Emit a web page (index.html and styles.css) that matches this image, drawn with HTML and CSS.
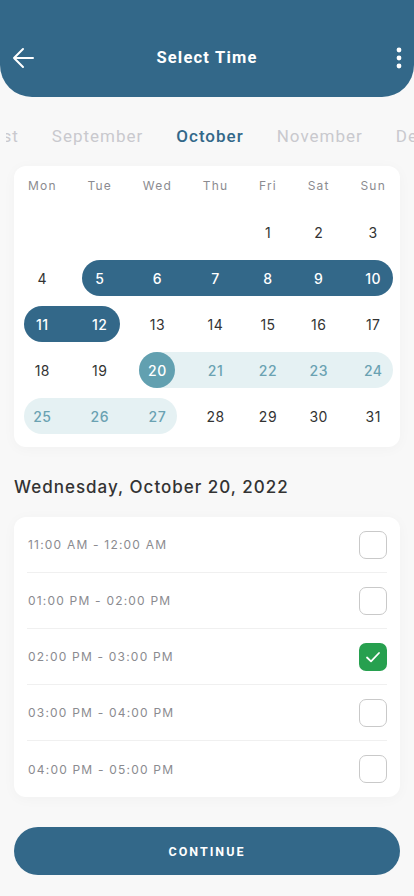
FILE: index.html
```html
<!DOCTYPE html>
<html lang="en">
<head>
    <meta charset="UTF-8">
    <meta name="viewport" content="width=device-width, initial-scale=1.0">
    <title>Select Time</title>
    <link rel="stylesheet" href="styles.css">
</head>
<body>
    <div class="header">
        <a href="javascript:;" class="icon back">
            <svg width="22" height="22" viewBox="0 0 22 22"><path d="M21 11H2M11 2L2 11l9 9" fill="none" stroke="#fff" stroke-width="2" stroke-linecap="round" stroke-linejoin="round"/></svg>
        </a>
        <h1 class="title">Select Time</h1>
        <a href="javascript:;" class="icon more">
            <svg width="22" height="22" viewBox="0 0 22 22"><circle cx="19" cy="3" r="2.4" fill="#fff"/><circle cx="19" cy="11" r="2.4" fill="#fff"/><circle cx="19" cy="19" r="2.4" fill="#fff"/></svg>
        </a>
    </div>

    <div class="months">
        <div class="side left">
            <span>August</span>
            <span>September</span>
        </div>
        <span class="current">October</span>
        <div class="side right">
            <span>November</span>
            <span>December</span>
        </div>
    </div>

    <div class="card calendar">
        <div class="wd">Mon</div>
        <div class="wd">Tue</div>
        <div class="wd">Wed</div>
        <div class="wd">Thu</div>
        <div class="wd">Fri</div>
        <div class="wd">Sat</div>
        <div class="wd">Sun</div>

        <div class="day"></div>
        <div class="day"></div>
        <div class="day"></div>
        <div class="day"></div>
        <div class="day"><span>1</span></div>
        <div class="day"><span>2</span></div>
        <div class="day"><span>3</span></div>

        <div class="day"><span>4</span></div>
        <div class="day dark start"><span>5</span></div>
        <div class="day dark"><span>6</span></div>
        <div class="day dark"><span>7</span></div>
        <div class="day dark"><span>8</span></div>
        <div class="day dark"><span>9</span></div>
        <div class="day dark end"><span>10</span></div>

        <div class="day dark start"><span>11</span></div>
        <div class="day dark end"><span>12</span></div>
        <div class="day"><span>13</span></div>
        <div class="day"><span>14</span></div>
        <div class="day"><span>15</span></div>
        <div class="day"><span>16</span></div>
        <div class="day"><span>17</span></div>

        <div class="day"><span>18</span></div>
        <div class="day"><span>19</span></div>
        <div class="day light start picked"><span>20</span></div>
        <div class="day light"><span>21</span></div>
        <div class="day light"><span>22</span></div>
        <div class="day light"><span>23</span></div>
        <div class="day light end"><span>24</span></div>

        <div class="day light start"><span>25</span></div>
        <div class="day light"><span>26</span></div>
        <div class="day light end"><span>27</span></div>
        <div class="day"><span>28</span></div>
        <div class="day"><span>29</span></div>
        <div class="day"><span>30</span></div>
        <div class="day"><span>31</span></div>
    </div>

    <h2 class="date">Wednesday, October 20, 2022</h2>

    <div class="card slots">
        <div class="slot">
            <span>11:00 AM - 12:00 AM</span>
            <span class="check"></span>
        </div>
        <div class="slot">
            <span>01:00 PM - 02:00 PM</span>
            <span class="check"></span>
        </div>
        <div class="slot">
            <span>02:00 PM - 03:00 PM</span>
            <span class="check on">
                <svg width="28" height="28" viewBox="0 0 28 28"><path d="M8 14.5l4 3.8 8-8.3" fill="none" stroke="#fff" stroke-width="1.8" stroke-linecap="round" stroke-linejoin="round"/></svg>
            </span>
        </div>
        <div class="slot">
            <span>03:00 PM - 04:00 PM</span>
            <span class="check"></span>
        </div>
        <div class="slot">
            <span>04:00 PM - 05:00 PM</span>
            <span class="check"></span>
        </div>
    </div>

    <a href="javascript:;" class="btn">CONTINUE</a>
</body>
</html>
```

FILE: styles.css
```css
* {
    padding: 0;
    margin: 0;
    box-sizing: border-box;
}
a {
    text-decoration: none;
}
body {
    background-color: #f8f8f8;
    font-family: Inter, "Noto Sans", sans-serif;
    color: #333;
}

/* header */
.header {
    display: flex;
    align-items: center;
    justify-content: space-between;
    height: 97px;
    padding: 18px 12px 0 12px;
    background-color: #336889;
    border-radius: 0 0 32px 32px;
}
.header .icon {
    display: flex;
    width: 22px;
    height: 22px;
}
.header .title {
    font-family: Roboto, "Liberation Sans", sans-serif;
    font-size: 16.5px;
    font-weight: 700;
    letter-spacing: 1.2px;
    color: #fff;
}

/* month strip */
.months {
    display: grid;
    grid-template-columns: minmax(0, 1fr) auto minmax(0, 1fr);
    column-gap: 33px;
    padding: 27px 0 18px 6px;
    font-family: Roboto, "Liberation Sans", sans-serif;
    font-size: 17px;
    line-height: 24px;
    letter-spacing: 1px;
    color: #c9c9ce;
    white-space: nowrap;
    overflow: hidden;
}
.months .side {
    display: flex;
    gap: 33px;
    overflow: hidden;
}
.months .left {
    justify-content: flex-end;
}
.months .current {
    color: #336889;
    font-weight: 500;
}

/* cards */
.card {
    margin: 0 14px;
    background-color: #fff;
    border-radius: 12px;
    box-shadow: 0 2px 14px rgba(0, 0, 0, 0.03);
}

/* calendar: columns take the width of the weekday names */
.calendar {
    display: grid;
    grid-template-columns: repeat(7, auto);
    grid-template-rows: 33px;
    grid-auto-rows: 46px;
    justify-content: space-between;
    padding: 10px 14px 8px 14px;
}
.calendar .wd {
    font-size: 12px;
    line-height: 20px;
    letter-spacing: 1.2px;
    color: #8b8b90;
    text-align: center;
}
.calendar .day {
    position: relative;
    display: flex;
    align-items: center;
    justify-content: center;
    font-size: 14px;
    letter-spacing: 0.5px;
}
.calendar .day span {
    position: relative;
    z-index: 1;
    display: flex;
    align-items: center;
    justify-content: center;
    flex: none;
    width: 36px;
    height: 36px;
    margin: 0 -18px;
    border-radius: 50%;
}
.calendar .dark::before,
.calendar .light::before {
    content: "";
    position: absolute;
    top: 5px;
    bottom: 5px;
    left: -17px;
    right: -17px;
}
.calendar .dark::before {
    background-color: #336889;
}
.calendar .light::before {
    background-color: #e5f1f3;
}
.calendar .start::before {
    left: calc(50% - 18px);
    border-radius: 18px 0 0 18px;
}
.calendar .end::before {
    right: calc(50% - 20px);
    border-radius: 0 18px 18px 0;
}
.calendar .dark {
    color: #fff;
    font-weight: 500;
}
.calendar .light {
    color: #6aa2b2;
    font-weight: 500;
}
.calendar .picked span {
    background-color: #62a0b0;
    color: #fff;
}

/* selected day */
.date {
    margin: 28px 14px 18px 14px;
    font-size: 17px;
    font-weight: 500;
    line-height: 24px;
    letter-spacing: 1px;
    color: #333;
}

/* time slots */
.slots {
    padding: 0 13px;
}
.slot {
    display: flex;
    align-items: center;
    justify-content: space-between;
    height: 56px;
    padding-left: 1px;
    border-bottom: 1px solid #f0f0f0;
    font-size: 12px;
    letter-spacing: 1.2px;
    color: #8b8b90;
}
.slot:last-child {
    border-bottom: none;
}
.check {
    display: flex;
    width: 28px;
    height: 28px;
    border: 1px solid #c9c9c9;
    border-radius: 7px;
}
.check.on {
    border: none;
    background-color: #27a04f;
}

/* button */
.btn {
    display: flex;
    align-items: center;
    justify-content: center;
    height: 48px;
    margin: 30px 14px 0 14px;
    border-radius: 24px;
    background-color: #336889;
    font-family: Roboto, "Liberation Sans", sans-serif;
    font-size: 12.5px;
    font-weight: 700;
    letter-spacing: 2px;
    color: #fff;
}
```
